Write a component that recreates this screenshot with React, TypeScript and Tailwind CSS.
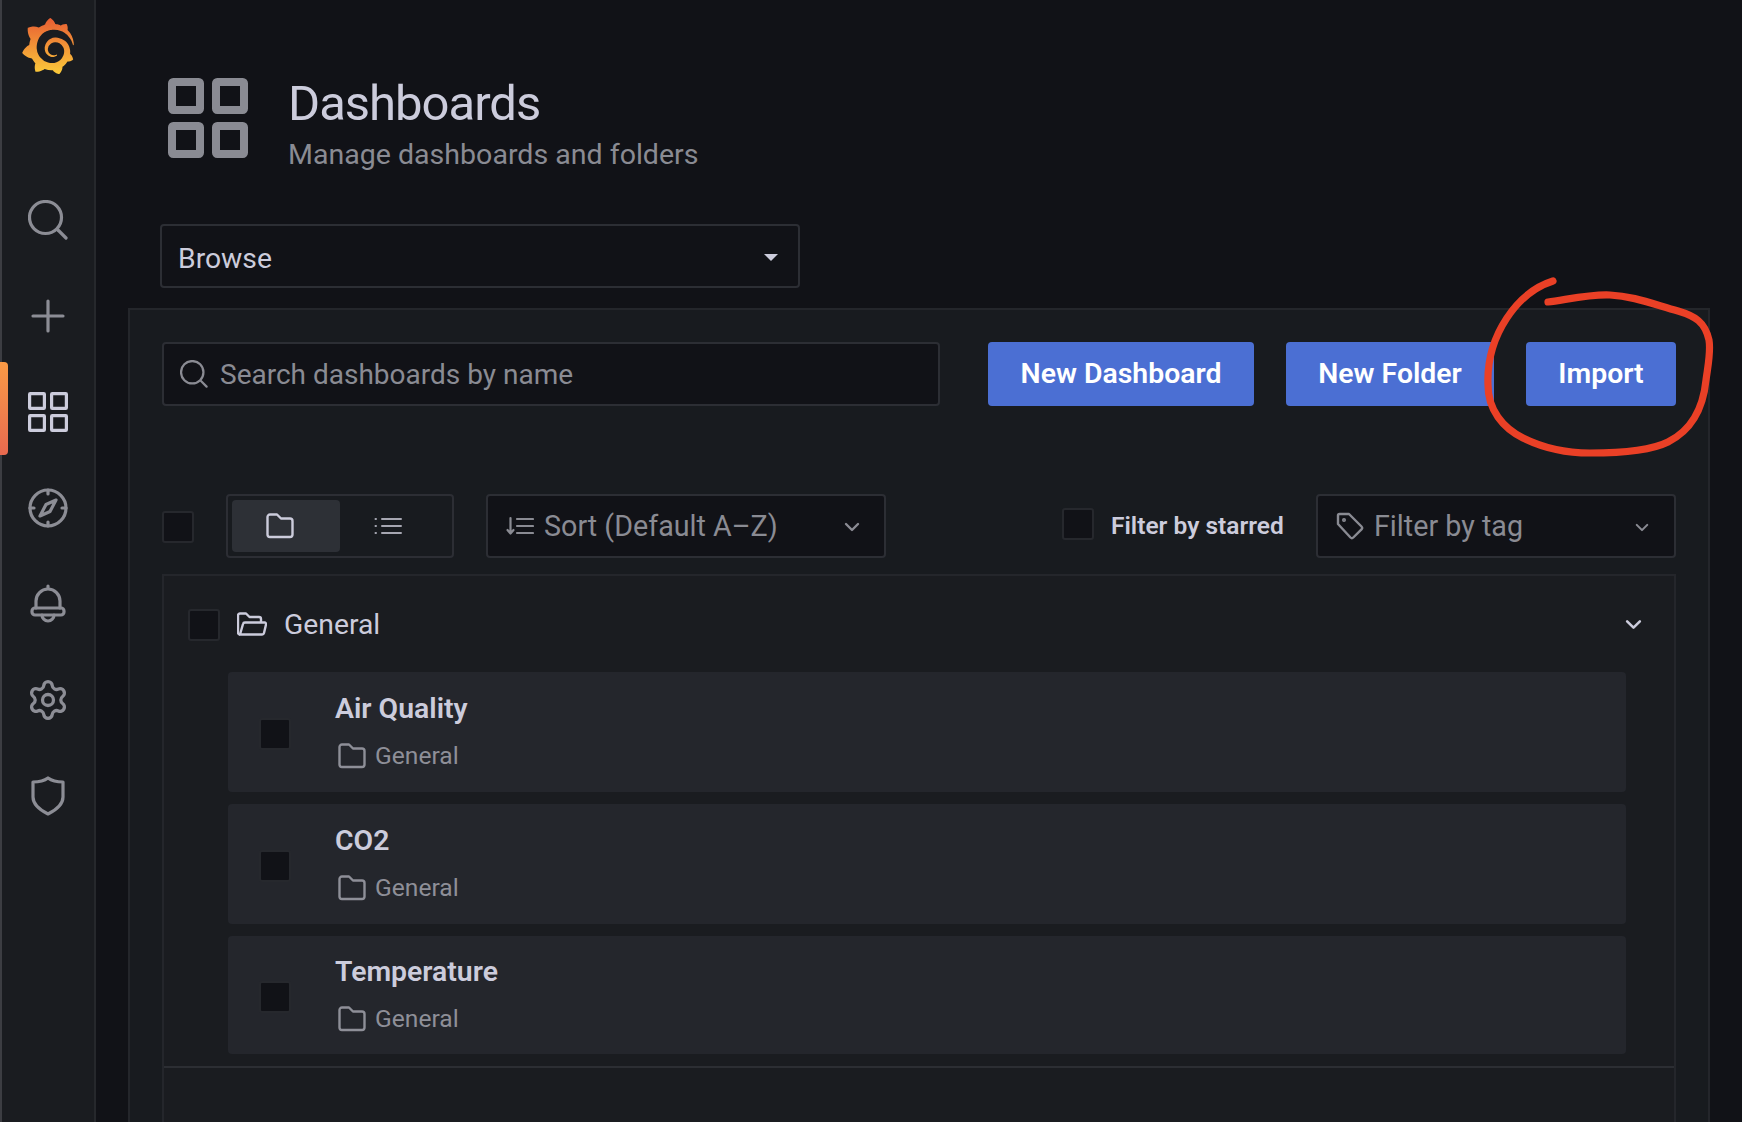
import React from "react";
import { SiGrafana } from "react-icons/si";
import { Settings } from "lucide-react";

type IP = { className?: string };

const Grid = ({ className, w = 3 }: IP & { w?: number }) => {
  const s = 18 - w;
  const a = w / 2;
  const b = 22 + w / 2;
  return (
    <svg viewBox="0 0 40 40" fill="none" stroke="currentColor" strokeWidth={w} strokeLinejoin="round" className={className}>
      <rect x={a} y={a} width={s} height={s} rx={0.6} />
      <rect x={b} y={a} width={s} height={s} rx={0.6} />
      <rect x={a} y={b} width={s} height={s} rx={0.6} />
      <rect x={b} y={b} width={s} height={s} rx={0.6} />
    </svg>
  );
};
const Search = ({ className }: IP) => (
  <svg viewBox="0 0 40 40" fill="none" stroke="currentColor" strokeWidth={3.2} strokeLinecap="round" className={className}>
    <circle cx={17.5} cy={17.5} r={16} />
    <path d="M30 30l8 8" />
  </svg>
);
const Plus = ({ className }: IP) => (
  <svg viewBox="0 0 40 40" fill="none" stroke="currentColor" strokeWidth={3.2} strokeLinecap="round" className={className}>
    <path d="M20 5v30M5 20h30" />
  </svg>
);
const Compass = ({ className }: IP) => (
  <svg viewBox="0 0 40 40" fill="none" stroke="currentColor" strokeWidth={3.2} strokeLinecap="round" strokeLinejoin="round" className={className}>
    <circle cx={20} cy={20} r={18} />
    <path d="M20 2v4M20 34v4M2 20h4M34 20h4" />
    <path d="M28 12l-10 4.500L12 28l10-4.500z" />
  </svg>
);
const Bell = ({ className }: IP) => (
  <svg viewBox="0 0 40 40" fill="none" stroke="currentColor" strokeWidth={3.2} strokeLinecap="round" strokeLinejoin="round" className={className}>
    <path d="M20 2v3M8 24V17a12 12 0 0 1 24 0v7" />
    <path d="M7 24h26a3 3 0 0 1 3 3v1a3 3 0 0 1-3 3H7a3 3 0 0 1-3-3v-1a3 3 0 0 1 3-3z" />
    <path d="M14 31a6 6 0 0 0 12 0" />
  </svg>
);
const Shield = ({ className }: IP) => (
  <svg viewBox="0 0 40 40" fill="none" stroke="currentColor" strokeWidth={3.2} strokeLinejoin="round" className={className}>
    <path d="M20 2c4 3 10 4 15 4v15c0 7-7 13-15 17C12 34 5 28 5 21V6c5 0 11-1 15-4z" />
  </svg>
);
const Folder = ({ className }: IP) => (
  <svg viewBox="0 0 28 26" fill="none" stroke="currentColor" strokeWidth={2.4} strokeLinejoin="round" className={className}>
    <path d="M1.500 4a2.500 2.500 0 0 1 2.500-2.500h7l4 4h9a2.500 2.500 0 0 1 2.500 2.500v13.500a2.500 2.500 0 0 1-2.500 2.500H4a2.500 2.500 0 0 1-2.500-2.500z" />
  </svg>
);
const FolderOpen = ({ className }: IP) => (
  <svg viewBox="0 0 30 24" fill="none" stroke="currentColor" strokeWidth={2.4} strokeLinejoin="round" className={className}>
    <path d="M3 22.500a2 2 0 0 1-2-2V3.500a2 2 0 0 1 2-2h6l3.500 3.500H22a2 2 0 0 1 2 2v3" />
    <path d="M3 22.500l3-10.500a2 2 0 0 1 2-1.500h19.500a1.500 1.500 0 0 1 1.500 2l-2 8.500a2 2 0 0 1-2 1.500z" />
  </svg>
);
const ListIcon = ({ className }: IP) => (
  <svg viewBox="0 0 28 20" fill="none" stroke="currentColor" strokeWidth={2} strokeLinecap="round" className={className}>
    <path d="M8 3h19M8 10h19M8 17h19M1.500 3h.5M1.500 10h.5M1.500 17h.5" />
  </svg>
);
const SortIcon = ({ className }: IP) => (
  <svg viewBox="0 0 28 20" fill="none" stroke="currentColor" strokeWidth={2.200} strokeLinecap="round" strokeLinejoin="round" className={className}>
    <path d="M4.500 2v15M1.500 14l3 3.500 3-3.500M11 3h16M11 10h16M11 17h16" />
  </svg>
);
const Tag = ({ className }: IP) => (
  <svg viewBox="0 0 28 28" fill="none" stroke="currentColor" strokeWidth={2.4} strokeLinejoin="round" className={className}>
    <path d="M2 3.500A1.500 1.500 0 0 1 3.500 2H13l12.500 12.500a2 2 0 0 1 0 2.800l-8.200 8.200a2 2 0 0 1-2.800 0L2 12z" />
    <circle cx={8} cy={8} r={0.8} />
  </svg>
);
const Chevron = ({ className }: IP) => (
  <svg viewBox="0 0 16 10" fill="none" stroke="currentColor" strokeWidth={2.4} strokeLinecap="round" strokeLinejoin="round" className={className}>
    <path d="M2 2l6 6 6-6" />
  </svg>
);

const Check = ({ className = "" }: IP) => (
  <span className={"block w-8 h-8 shrink-0 rounded-[3px] bg-[#111217] border-2 border-[#26282d] " + className} />
);

const Blue = ({ children, className = "" }: { children: React.ReactNode; className?: string }) => (
  <button className={"h-16 pt-[1px] rounded-[4px] bg-[#4b6fd3] text-white text-[28.400px] font-semibold shrink-0 " + className}>{children}</button>
);

const NavItem = ({ children, active }: { children: React.ReactNode; active?: boolean }) => (
  <div className={"relative h-24 flex items-center justify-center " + (active ? "text-[#ccccdc]" : "text-[#8c8d95]")}>
    {active && <span className="absolute -left-[2px] -top-[2px] w-2 h-[93px] rounded-r-[4px] bg-gradient-to-b from-[#f99a45] to-[#e8694f]" />}
    {children}
  </div>
);

const Item = ({ title, className = "", checkClass = "mt-[4px]" }: { title: string; className?: string; checkClass?: string }) => (
  <div className={"rounded-[4px] bg-[#24262c] flex items-center pl-[31px] " + className}>
    <Check className={"border-[#1d1f24] " + checkClass} />
    <div className="ml-[44px]">
      <div className="text-[28.400px] leading-8 font-semibold text-[#ccccdc]">{title}</div>
      <div className="flex items-center mt-[15px] text-[#8e8f98] text-[24.600px] leading-8">
        <Folder className="w-7 h-[26px] ml-[3px] mr-[9px]" />
        General
      </div>
    </div>
  </div>
);

export default function App() {
  return (
    <div className="relative flex w-[1742px] h-[1122px] overflow-hidden bg-[#111217] font-['Roboto',sans-serif] text-[#ccccdc]">
      <svg width="0" height="0" className="absolute">
        <defs>
          <linearGradient id="grafana" x1="0" y1="0" x2="0" y2="1">
            <stop offset="0" stopColor="#e85d33" />
            <stop offset="1" stopColor="#fbca3a" />
          </linearGradient>
        </defs>
      </svg>
      <aside className="w-[96px] shrink-0 h-full bg-[#1a1c20] border-l-2 border-l-[#3c3d42] border-r-2 border-r-[#26282c]">
        <div className="h-[172px] flex justify-center pt-[18px]">
          <SiGrafana size={56} fill="url(#grafana)" />
        </div>
        <NavItem><Search className="w-10 h-10" /></NavItem>
        <NavItem><Plus className="w-10 h-10" /></NavItem>
        <NavItem active><Grid w={3.2} className="w-10 h-10" /></NavItem>
        <NavItem><Compass className="w-10 h-10" /></NavItem>
        <NavItem><Bell className="w-10 h-10" /></NavItem>
        <NavItem><Settings className="w-11 h-11" strokeWidth={1.8} /></NavItem>
        <NavItem><Shield className="w-10 h-10" /></NavItem>
      </aside>

      <main className="flex-1 min-w-0 flex flex-col">
        <header className="flex items-start pt-[78px] pl-[72px] h-[224px] shrink-0">
          <Grid w={4} className="w-20 h-20 text-[#8a8b93] shrink-0" />
          <div className="ml-[40px] -mt-[4px]">
            <h1 className="text-[49px] leading-[60px] tracking-[-1px] text-[#ccccdc]">Dashboards</h1>
            <p className="text-[28.550px] leading-[36px] mt-[3px] text-[#8a8b93]">Manage dashboards and folders</p>
          </div>
        </header>

        <div className="ml-[64px] w-[640px] h-16 shrink-0 rounded-[4px] border-2 border-[#2c2e34] flex items-center justify-between pl-[16px] pr-[20px] text-[28.300px] text-[#ccccdc]">
          <span className="pt-[6px]">Browse</span>
          <span className="mt-[2px] w-0 h-0 border-x-[7px] border-x-transparent border-t-[7px] border-t-[#ccccdc]" />
        </div>

        <section className="ml-[32px] mr-[32px] mt-[20px] flex-1 bg-[#181b1f] border-2 border-[#24262b] pt-8 px-8">
          <div className="flex items-center h-16">
            <div className="w-[778px] h-16 rounded-[4px] border-2 border-[#2c2e34] bg-[#111217] flex items-center pl-[16px] text-[28px] text-[#8a8b93]">
              <Search className="w-7 h-7 mr-[12px]" />
              <span className="pt-[2px]">Search dashboards by name</span>
            </div>
            <Blue className="ml-[48px] w-[266px]">New Dashboard</Blue>
            <Blue className="ml-8 w-[208px]">New Folder</Blue>
            <Blue className="ml-8 w-[150px]">Import</Blue>
          </div>

          <div className="flex items-center h-16 mt-[88px]">
            <Check className="mt-[2px]" />
            <div className="ml-8 w-[228px] h-16 rounded-[4px] border-2 border-[#2c2e34] p-[4px] flex">
              <div className="w-[108px] h-[52px] rounded-[4px] bg-[#2d3036] flex items-center justify-center text-[#ccccdc]">
                <Folder className="w-[28px] h-[26px] mr-[12px]" />
              </div>
              <div className="w-[108px] h-[52px] flex items-center justify-center text-[#a6a7b2]">
                <ListIcon className="w-[28px] h-5 mr-[13px]" />
              </div>
            </div>
            <div className="ml-8 w-[400px] h-16 rounded-[4px] border-2 border-[#2c2e34] bg-[#111217] flex items-center pl-[18px] pr-[24px] text-[28.700px] text-[#8a8b93]">
              <SortIcon className="w-7 h-5 mr-[10px]" />
              <span className="flex-1 pt-[2px]">Sort (Default A–Z)</span>
              <Chevron className="w-[16px] h-[10px] mt-[2px]" />
            </div>
            <div className="ml-[176px] flex items-center -mt-[4px]">
              <Check />
              <span className="ml-[17px] text-[24.500px] font-semibold text-[#ccccdc] w-[205px] mt-[4px]">Filter by starred</span>
            </div>
            <div className="w-[360px] h-16 rounded-[4px] border-2 border-[#2c2e34] bg-[#111217] flex items-center pl-[18px] pr-[25px] text-[28.700px] text-[#8a8b93]">
              <Tag className="w-7 h-7 mr-[10px]" />
              <span className="flex-1 pt-[2px]">Filter by tag</span>
              <Chevron className="w-[14px] h-[9px] mt-[2px]" />
            </div>
          </div>

          <div className="mt-4 border-2 border-b-0 border-[#24262b] bg-[#1a1c20] h-[600px]">
            <div className="h-24 flex items-center pl-6 pr-[32px] text-[#ccccdc]">
              <Check className="mt-[2px]" />
              <FolderOpen className="w-[30px] h-6 ml-[17px] mr-[17px]" />
              <span className="flex-1 text-[28.300px] leading-8 pt-[2px]">General</span>
              <Chevron className="w-[17px] h-[11px]" />
            </div>
            <div className="ml-[64px] mr-[48px]">
              <Item title="Air Quality" className="h-[120px]" />
              <Item title="CO2" className="h-[120px] mt-3" />
              <Item title="Temperature" className="h-[118px] mt-3 pt-[1px]" checkClass="mt-[2px]" />
            </div>
            <div className="mt-3 border-t-2 border-[#2c2e33]" />
          </div>
        </section>
      </main>

      <svg className="absolute left-0 top-0 pointer-events-none" width={1742} height={1122} fill="none">
        <path
          d="M1553 281C1518 292 1486 335 1488 385C1488 410 1503 428 1523 438C1545 449 1565 453 1590 453C1620 453 1650 451 1668 442C1690 431 1703 410 1706 380C1708 365 1711 352 1709 340C1705 322 1695 316 1678 311C1650 303 1632 296 1610 295C1590 294 1565 300 1548 302"
          stroke="#ea4026"
          strokeWidth={7.200}
          strokeLinecap="round"
          strokeLinejoin="round"
        />
      </svg>
    </div>
  );
}
